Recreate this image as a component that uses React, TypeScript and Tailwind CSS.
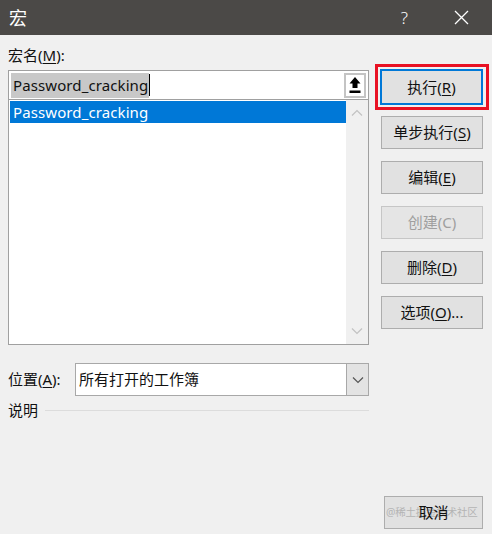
import React from "react";

const font = "font-['Segoe_UI','Noto_Sans','Noto_Sans_CJK_SC',sans-serif]";

function Btn({ label, u, rest, disabled }: { label: string; u?: string; rest?: string; disabled?: boolean }) {
  return (
    <div
      className={`flex h-[33px] w-[102px] items-center justify-center border text-[15px] ${
        disabled ? "border-[#c6c6c6] bg-[#e5e5e5] text-[#9f9f9f]" : "border-[#adadad] bg-[#e1e1e1] text-[#111]"
      }`}
    >
      <span>
        {label}
        {u ? (
          <>
            (<span className="underline underline-offset-2">{u}</span>){rest}
          </>
        ) : null}
      </span>
    </div>
  );
}

function UploadIcon() {
  return (
    <svg width="14" height="18" viewBox="0 0 14 18">
      <path d="M7 1 L1.5 7.5 H4.5 V12 H9.5 V7.5 H12.5 Z" fill="#000" />
      <rect x="1.5" y="14.5" width="11" height="2.5" fill="#000" />
    </svg>
  );
}

function Chevron({ up, color }: { up?: boolean; color: string }) {
  return (
    <svg width="12" height="8" viewBox="0 0 12 8">
      <path d={up ? "M1 6.5 L6 1.5 L11 6.5" : "M1 1.5 L6 6.5 L11 1.5"} fill="none" stroke={color} strokeWidth="1.2" />
    </svg>
  );
}

export default function App() {
  return (
    <div className={`relative flex h-[534px] w-[492px] flex-col bg-[#f0f0f0] ${font}`}>
      {/* Title bar */}
      <div className="flex h-[35px] items-center bg-[#4b4947] pl-[9px] text-white">
        <span className="text-[18px] font-['Noto_Sans_CJK_SC',sans-serif]">宏</span>
        <span className="ml-auto mr-[46px] text-[17px] font-['Noto_Sans',sans-serif] font-light">?</span>
        <svg width="15" height="15" viewBox="0 0 15 15" className="mr-[23px]">
          <path d="M1 1 L14 14 M14 1 L1 14" stroke="#fff" strokeWidth="1.3" />
        </svg>
      </div>

      <div className="flex pl-[8px]">
        {/* Left column */}
        <div className="flex w-[361px] flex-col">
          <div className="mt-[9px] h-[22px] text-[15px] leading-[22px] text-[#111]">
            宏名(<span className="underline underline-offset-2">M</span>):
          </div>
          <div className="mt-[4px] flex h-[30px] items-center border border-[#a0a0a0] bg-white pl-[2px]">
            <span className="flex h-[25px] items-center bg-[#c8c8c8] pl-[2px] pr-[1px] text-[15px] tracking-[0.1px] text-[#111]">
              Password_cracking
            </span>
            <span className="h-[22px] w-[1px] bg-black" />
            <div className="ml-auto mr-[2px] flex h-[25px] w-[22px] items-center justify-center border-2 border-[#c4c4c4] bg-white">
              <UploadIcon />
            </div>
          </div>
          <div className="flex h-[245px] border border-t-0 border-[#a0a0a0] bg-white">
            <div className="flex-1 pl-[1px] pt-[1px]">
              <div className="flex h-[22px] items-center bg-[#0078d7] pl-[3px] text-[15px] tracking-[0.1px] text-white">
                Password_cracking
              </div>
            </div>
            <div className="flex w-[22px] flex-col items-center justify-between bg-[#f0f0f0] py-[9px]">
              <Chevron up color="#c2c2c2" />
              <Chevron color="#c2c2c2" />
            </div>
          </div>

          <div className="mt-[18px] flex items-center">
            <span className="w-[67px] text-[15px] text-[#111]">
              位置(<span className="underline underline-offset-2">A</span>):
            </span>
            <div className="flex h-[33px] flex-1 items-center border border-[#a8a8a8] bg-white">
              <span className="pl-[3px] text-[15px] text-[#111]">所有打开的工作簿</span>
              <div className="ml-auto flex h-full w-[22px] items-center justify-center border-l border-[#a8a8a8] bg-[#e3e3e3]">
                <Chevron color="#555" />
              </div>
            </div>
          </div>

          <div className="mt-[3px] flex items-center">
            <span className="text-[15px] text-[#111]">说明</span>
            <span className="ml-[7px] h-[1px] flex-1 bg-[#dcdcdc]" />
          </div>
        </div>

        {/* Right column */}
        <div className="ml-[6px] flex w-[114px] flex-col">
          <div className="mt-[29px] border-[3px] border-[#e81123] p-[2px]">
            <div className="flex h-[36px] w-[103px] items-center justify-center border-2 border-[#0078d7] bg-[#e1e1e1] text-[15px] text-[#111]">
              <span>
                执行(<span className="underline underline-offset-2">R</span>)
              </span>
            </div>
          </div>
          <div className="mt-[6px] flex flex-col gap-[12px] pl-[6px]">
            <Btn label="单步执行" u="S" />
            <Btn label="编辑" u="E" />
            <Btn label="创建(C)" disabled />
            <Btn label="删除" u="D" />
            <Btn label="选项" u="O" rest="..." />
          </div>
        </div>
      </div>

      {/* Cancel */}
      <div className="mt-auto mb-[5px] flex justify-end pr-[9px]">
        <div className="relative flex h-[33px] w-[99px] items-center justify-center border border-[#adadad] bg-[#e1e1e1]">
          <span className="absolute left-[1px] whitespace-nowrap text-[10.5px] tracking-[-0.2px] text-[#b4b4b4]">
            @稀土掘金技术社区
          </span>
          <span className="relative text-[15px] text-[#111]">取消</span>
        </div>
      </div>
    </div>
  );
}
